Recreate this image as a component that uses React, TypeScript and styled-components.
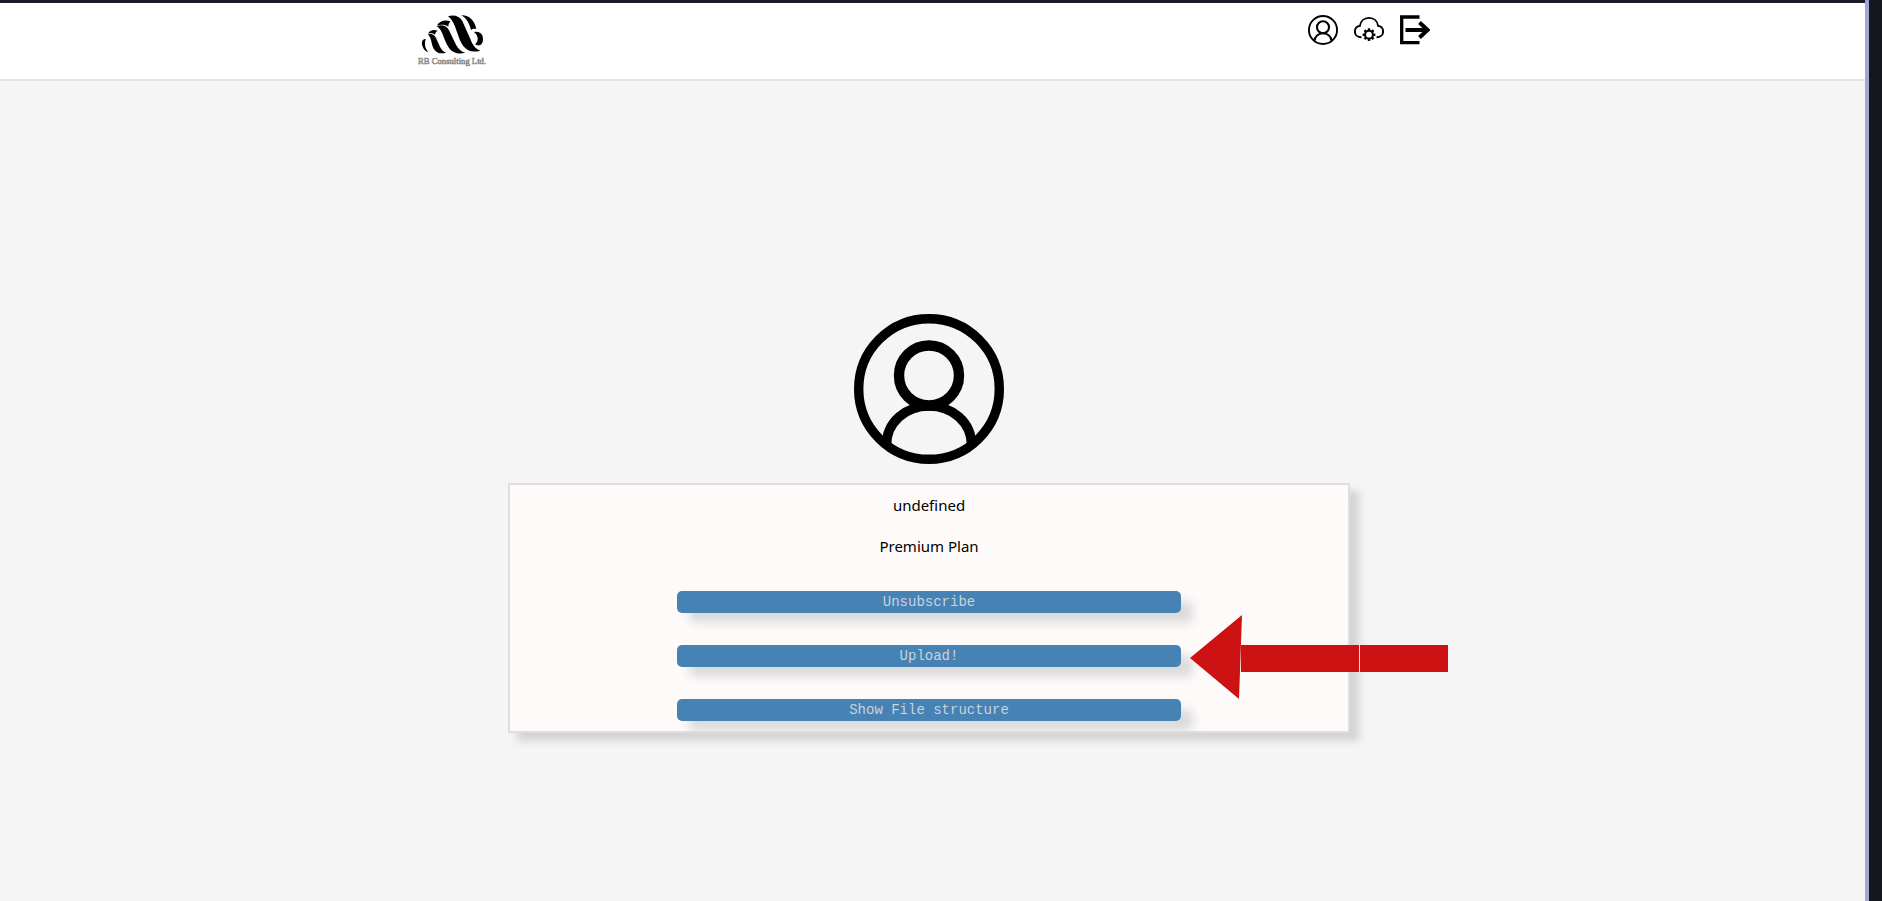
import React from "react";
import styled, { createGlobalStyle } from "styled-components";

const GlobalStyle = createGlobalStyle`
  *, *::before, *::after { box-sizing: border-box; }
  body { margin: 0; background: #15161e; font-family: "Noto Sans", sans-serif; font-size: 15px; color: #000; }
`;

const Frame = styled.div`
  min-height: 100vh;
  margin-right: 13px;
  display: flex;
  flex-direction: column;
  border-right: 4px solid #9fa8cf;
  background: #f5f5f5;
`;

const WindowEdge = styled.div`
  height: 3px;
  background: #1a1a26;
`;

const Header = styled.header`
  height: 78px;
  background: #fff;
  border-bottom: 2px solid #e5e5e9;
  display: flex;
  justify-content: space-around;
  align-items: flex-start;
  padding: 12px 8px 0 0;
`;

const LogoLink = styled.a`
  display: block;
  width: 76px;
  height: 54px;

  svg { display: block; overflow: visible; }
`;

const LogoText = styled.text`
  font: 26px "Liberation Serif", serif;
  fill: #fff;
  stroke: #8a8a8a;
  stroke-width: 2px;
`;

const Nav = styled.nav`
  display: flex;
  gap: 16px;
  padding-right: 16px;
`;

const NavLink = styled.a`
  display: block;
  width: 30px;
  height: 30px;
  color: #000;

  svg { display: block; }
`;

const Main = styled.main`
  flex: 1;
  display: flex;
  flex-direction: column;
  align-items: center;
  justify-content: center;
  gap: 19px;
  padding: 64px 7px 0 0;
`;

const Card = styled.section`
  width: 842px;
  max-width: 100%;
  min-height: 250px;
  background: #fffafa;
  border: 2px solid #dedede;
  box-shadow: 9px 8px 8px #d3d3d3;
  display: flex;
  flex-direction: column;
  align-items: center;
  padding-top: 8px;
`;

const Line = styled.p`
  margin: 0 0 16px;
  line-height: 25px;
`;

const Actions = styled.div`
  width: 504px;
  max-width: 100%;
  margin-top: 16px;
  display: flex;
  flex-direction: column;
  gap: 32px;
`;

const ActionRow = styled.div`
  position: relative;
  display: flex;
`;

const ActionButton = styled.button`
  flex: 1;
  height: 22px;
  padding: 0;
  border: 0;
  border-radius: 5px;
  background: #4682b4;
  color: #c8d3dc;
  font: 14px/22px "Liberation Mono", monospace;
  box-shadow: 12px 10px 10px #dcdcdc;
`;

const Pointer = styled.svg`
  position: absolute;
  left: calc(100% + 8px);
  top: -31px;
  pointer-events: none;
`;

const UserIcon = ({ size }: { size: number }) => (
  <svg width={size} height={size} viewBox="0 0 150 150" fill="none" stroke="#000" aria-hidden="true">
    <circle cx="75" cy="75" r="70.3" strokeWidth="9.4" />
    <circle cx="75" cy="61.5" r="30" strokeWidth="10.4" />
    <path d="M32.5 131C32.5 108 52 92 75 92S117.5 108 117.5 131" strokeWidth="9.5" />
  </svg>
);

const CloudIcon = () => (
  <svg width="30" height="30" viewBox="0 0 30 30" fill="none" stroke="#000" strokeWidth="1.9" aria-hidden="true">
    <path d="M7.5 22.3C3.5 22.3 .9 19.8 .9 16.5C.9 13.5 3 11.3 5.9 10.9C6.5 6.3 10 2.9 15 2.9S23.5 6.3 24.1 10.9C27 11.3 29.1 13.5 29.1 16.5C29.1 19.8 26.5 22.3 22.5 22.3" />
    <circle cx="15" cy="19.7" r="3.9" strokeWidth="2" />
    <path d="M15 13.3v2.2M15 23.9v2.2M8.6 19.7h2.2M19.2 19.7h2.2M10.5 15.2l1.6 1.6M17.9 22.6l1.6 1.6M10.5 24.2l1.6-1.6M17.9 16.8l1.6-1.6" strokeWidth="2.4" />
  </svg>
);

const ExitIcon = () => (
  <svg width="30" height="30" viewBox="0 0 30 30" fill="none" stroke="#000" aria-hidden="true">
    <path d="M19.5 2H1.7V27.7H19.5" strokeWidth="3.3" />
    <path d="M5.5 15H27M19.5 7.5L27.5 15L19.5 22.5" strokeWidth="4" />
  </svg>
);

const Logo = () => (
  <svg width="76" height="54" viewBox="33 45 228 162" role="img" aria-label="RB Consulting Ltd.">
    <path d="M78 117C66 115 64 128 67 137C69 146 75 153 85 157C78 148 74 139 75 130C75 124 76 120 78 117Z" />
    <path d="M84 103C95 100 103 104 108 114L120 140C124 149 130 155 138 158C122 163 109 159 101 146C93 132 96 116 84 103Z" />
    <path d="M84 101C89 91 100 88 113 92C108 95 106 99 105 104C99 99 91 99 84 101Z" />
    <path d="M110 78C127 73 140 78 147 91L168 134C175 147 184 155 196 158C176 164 158 159 147 144C138 131 135 121 129 106C125 94 120 85 110 78Z" />
    <path d="M111 76C119 62 136 59 151 64C147 69 145 74 145 80C136 73 123 73 111 76Z" />
    <path d="M144 49C162 43 178 48 187 63L211 117C218 136 227 147 241 152C220 158 202 154 189 137C179 123 176 109 169 91C163 72 156 58 144 49Z" />
    <path d="M184 46C207 45 224 61 229 87C223 85 217 86 213 90C208 70 200 55 184 46Z" />
    <path d="M222 96C239 93 250 103 249 118C249 126 246 132 240 136C234 137 229 136 225 133C237 122 236 108 222 96Z" />
    <LogoText x="54" y="193">RB Consulting Ltd.</LogoText>
  </svg>
);

export default function App() {
  return (
    <>
      <GlobalStyle />
      <Frame>
        <WindowEdge />
        <Header>
          <LogoLink href="#"><Logo /></LogoLink>
          <Nav>
            <NavLink href="#profile" aria-label="Profile"><UserIcon size={30} /></NavLink>
            <NavLink href="#cloud" aria-label="Cloud settings"><CloudIcon /></NavLink>
            <NavLink href="#logout" aria-label="Log out"><ExitIcon /></NavLink>
          </Nav>
        </Header>
        <Main>
          <UserIcon size={150} />
          <Card>
            <Line>undefined</Line>
            <Line>Premium Plan</Line>
            <Actions>
              <ActionRow><ActionButton type="button">Unsubscribe</ActionButton></ActionRow>
              <ActionRow>
                <ActionButton type="button">Upload!</ActionButton>
                <Pointer width="260" height="86" viewBox="0 0 260 86" fill="#cc1212" aria-hidden="true">
                  <path d="M1 44L53 1L50 85Z" />
                  <path d="M52 31H170V58H52ZM171 31H259V58H171Z" />
                </Pointer>
              </ActionRow>
              <ActionRow><ActionButton type="button">Show File structure</ActionButton></ActionRow>
            </Actions>
          </Card>
        </Main>
      </Frame>
    </>
  );
}
